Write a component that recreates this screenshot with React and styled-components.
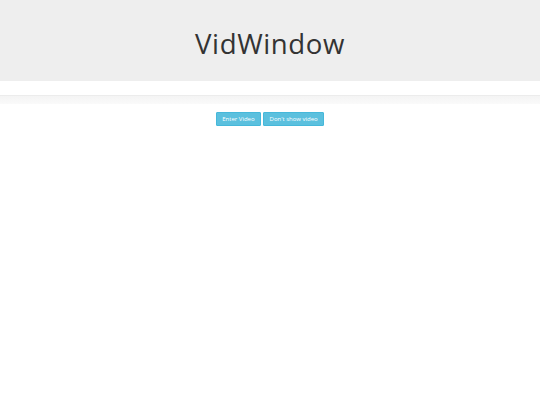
import React from "react";
import styled, { createGlobalStyle } from "styled-components";

const GlobalStyle = createGlobalStyle`
  html, body {
    margin: 0;
    padding: 0;
    background: #fff;
    font-family: "Open Sans", "Noto Sans", sans-serif;
    color: #333;
  }
`;

const Jumbotron = styled.header`
  background: #eeeeee;
  height: 81px;
  display: flex;
  align-items: center;
  justify-content: center;
  h1 {
    margin: 0;
    font-size: 27.6px;
    font-weight: 400;
    letter-spacing: 0.6px;
    color: #333;
    padding-top: 4px;
  }
`;

const Well = styled.div`
  margin-top: 14px;
  height: 8px;
  border-top: 1px solid #ececec;
  background: linear-gradient(to bottom, #f4f4f4, #fafafa);
`;

const Controls = styled.div`
  display: flex;
  justify-content: center;
  gap: 2px;
  margin-top: 8px;
`;

const Button = styled.button`
  height: 14px;
  padding: 0 5.5px;
  border: 1px solid #46b8da;
  border-radius: 1px;
  background: #5bc0de;
  color: #fff;
  font-family: "Open Sans", "Noto Sans", sans-serif;
  font-size: 6px;
  line-height: 12px;
  cursor: pointer;
`;

export default function App() {
  return (
    <>
      <GlobalStyle />
      <Jumbotron>
        <h1>VidWindow</h1>
      </Jumbotron>
      <Well />
      <Controls>
        <Button>Enter Video</Button>
        <Button>Don't show video</Button>
      </Controls>
    </>
  );
}
